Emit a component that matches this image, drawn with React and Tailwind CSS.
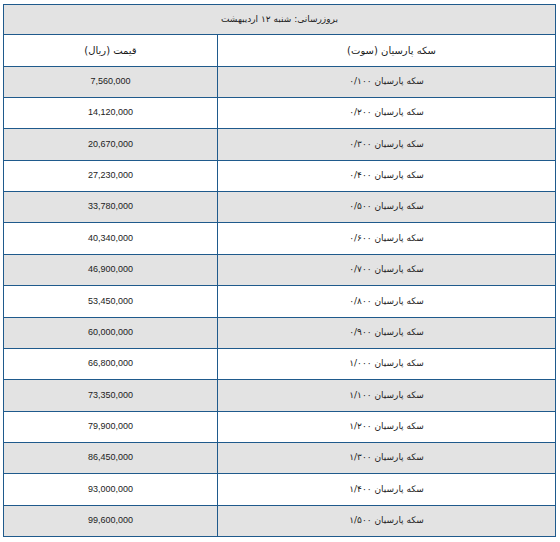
import React from "react";

const rows = [
  ["سکه پارسیان ۰/۱۰۰", "7,560,000"],
  ["سکه پارسیان ۰/۲۰۰", "14,120,000"],
  ["سکه پارسیان ۰/۳۰۰", "20,670,000"],
  ["سکه پارسیان ۰/۴۰۰", "27,230,000"],
  ["سکه پارسیان ۰/۵۰۰", "33,780,000"],
  ["سکه پارسیان ۰/۶۰۰", "40,340,000"],
  ["سکه پارسیان ۰/۷۰۰", "46,900,000"],
  ["سکه پارسیان ۰/۸۰۰", "53,450,000"],
  ["سکه پارسیان ۰/۹۰۰", "60,000,000"],
  ["سکه پارسیان ۱/۰۰۰", "66,800,000"],
  ["سکه پارسیان ۱/۱۰۰", "73,350,000"],
  ["سکه پارسیان ۱/۲۰۰", "79,900,000"],
  ["سکه پارسیان ۱/۳۰۰", "86,450,000"],
  ["سکه پارسیان ۱/۴۰۰", "93,000,000"],
  ["سکه پارسیان ۱/۵۰۰", "99,600,000"],
];

function rowH(k) {
  // full height (incl. bottom border) of k-th row so borders land on the reference lines
  return Math.round(4 + 31.35 * (k + 1)) - Math.round(4 + 31.35 * k) - (k === 0 ? 1 : 0);
}

const fa = { fontFamily: '"DejaVu Sans", sans-serif' };

export default function App() {
  return (
    <div className="w-[560px] h-[542px] bg-white pt-[4px] pl-[3px]">
      <div
        dir="rtl"
        className="w-[553px] flex flex-col border-t border-l border-r border-[#1f5a8c] text-[#1c1c1c]"
      >
        <div
          className="flex items-center justify-center bg-[#e3e3e3] border-b border-[#1f5a8c] text-[9px]"
          style={{ ...fa, height: rowH(0) }}
        >
          بروزرسانی: شنبه ۱۲ اردیبهشت
        </div>
        <div className="flex bg-white border-b border-[#1f5a8c] text-[10px]" style={{ ...fa, height: rowH(1) }}>
          <div className="flex-1 flex items-center justify-center pl-[10px]">سکه پارسیان (سوت)</div>
          <div className="w-[214px] flex items-center justify-center border-r border-[#1f5a8c]">قیمت (ریال)</div>
        </div>
        {rows.map((r, i) => (
          <div
            key={i}
            className={
              "flex border-b border-[#1f5a8c] " + (i % 2 === 0 ? "bg-[#e3e3e3]" : "bg-white")
            }
            style={{ height: rowH(i + 2) }}
          >
            <div className="flex-1 flex items-center justify-center text-[9px]" style={fa}>
              {r[0]}
            </div>
            <div
              dir="ltr"
              className="w-[214px] flex items-center justify-center border-r border-[#1f5a8c] text-[9px] font-['Liberation_Sans',sans-serif]"
            >
              {r[1]}
            </div>
          </div>
        ))}
      </div>
    </div>
  );
}
